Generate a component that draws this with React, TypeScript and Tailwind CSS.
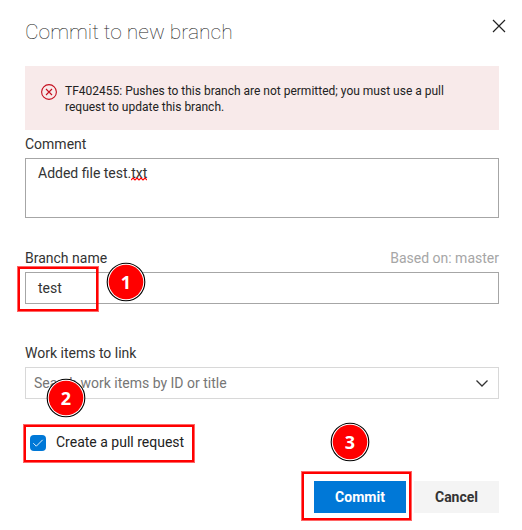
import React from 'react';

const labelClass = 'flex h-7 items-center justify-between text-[14px] leading-5 text-[#333333]';

function Marker({ n, place }: { n: number; place: string }) {
  return (
    <div className={`absolute size-[40px] ${place}`}>
      <svg className="absolute inset-0" width="40" height="40" viewBox="0 0 40 40">
        <circle cx="20" cy="20" r="18.8" fill="#fff" stroke="#000" strokeWidth="1.1" />
        <circle cx="20" cy="20" r="17.3" fill="#ff0000" />
      </svg>
      <span className="relative flex size-full items-center justify-center font-['Noto_Sans',sans-serif] text-[18px] leading-none font-bold text-white">
        {n}
      </span>
    </div>
  );
}

function Highlight({ place }: { place: string }) {
  return (
    <div className={`absolute border border-[#ff0000]/60 ${place}`}>
      <div className="size-full border-2 border-[#ff0000]" />
    </div>
  );
}

export default function App() {
  return (
    <div className="relative flex h-[530px] w-[522px] flex-col bg-white pr-[23px] pl-[25px] font-['Roboto',sans-serif]">
      <header className="flex h-[66px] items-start justify-between">
        <h1 className="pt-[17px] text-[21px] leading-[30px] font-thin text-[#222222]">Commit to new branch</h1>
        <svg className="mt-[19px] -mr-[7px]" width="14" height="14" viewBox="0 0 14 14" fill="none" stroke="#222" strokeWidth="1.2">
          <path d="M1 1l12 12M13 1L1 13" />
        </svg>
      </header>

      <div className="flex h-16 bg-[#f8eaea] pt-[17px] pl-4">
        <svg className="mt-px shrink-0" width="16" height="16" viewBox="0 0 16 16" fill="none" stroke="#c50f1f" strokeWidth="1.1">
          <circle cx="8" cy="8" r="7.4" />
          <path d="M5 5l6 6M11 5l-6 6" />
        </svg>
        <p className="ml-2 text-[12px] leading-4 text-[#222222]">
          TF402455: Pushes to this branch are not permitted; you must use a pull
          <br />
          request to update this branch.
        </p>
      </div>

      <div className={labelClass}>Comment</div>
      <div className="h-[60px] border border-[#a6a6a6] px-3 pt-1 text-[14px] leading-5 text-[#333333]">
        Added file test.
        <span className="relative">
          txt
          <svg className="absolute top-[12px] left-0" width="16" height="4" viewBox="0 0 16 4" fill="none" stroke="#f00" strokeWidth="1.1">
            <path d="M0 3l2-2 2 2 2-2 2 2 2-2 2 2 2-2 2 2" />
          </svg>
        </span>
      </div>

      <div className={`mt-[26px] ${labelClass}`}>
        <span>Branch name</span>
        <span className="text-[#a6a6a6]">Based on: master</span>
      </div>
      <div className="flex h-8 items-center border border-[#a6a6a6] px-3 text-[14px] text-[#333333]">test</div>

      <div className={`mt-[35px] ${labelClass}`}>Work items to link</div>
      <div className="flex h-8 items-center justify-between border border-[#d8d8d8] pr-[10px] pl-2 text-[14px] text-[#767676]">
        <span>Search work items by ID or title</span>
        <svg width="12" height="7" viewBox="0 0 12 7" fill="none" stroke="#333" strokeWidth="1.3">
          <path d="M.5.5L6 6 11.5.5" />
        </svg>
      </div>

      <div className="mt-[31px] flex h-6 items-center pl-[5px] text-[14px] text-[#222222]">
        <span className="mt-px flex size-4 items-center justify-center rounded-[4px] bg-[#0078d7]">
          <svg width="12" height="10" viewBox="0 0 12 10" fill="none" stroke="#fff" strokeWidth="0.9">
            <path d="M1.3 5.2l3 3L10.7 1.8" />
          </svg>
        </span>
        <span className="ml-[10px]">Create a pull request</span>
      </div>

      <div className="mt-[27px] flex justify-end gap-2 text-[14px] font-bold">
        <button className="h-8 w-[92px] bg-[#0078d7] text-white">Commit</button>
        <button className="h-8 w-[85px] bg-[#f4f4f4] text-[#333333]">Cancel</button>
      </div>

      <Highlight place="left-[17px] top-[266px] h-[46px] w-[82px]" />
      <Highlight place="left-[23px] top-[424px] h-[39px] w-[172px]" />
      <Highlight place="left-[301px] top-[471px] h-[50px] w-[111px]" />
      <Marker n={1} place="left-[106px] top-[262px]" />
      <Marker n={2} place="left-[46px] top-[378px]" />
      <Marker n={3} place="left-[330px] top-[422px]" />
    </div>
  );
}
